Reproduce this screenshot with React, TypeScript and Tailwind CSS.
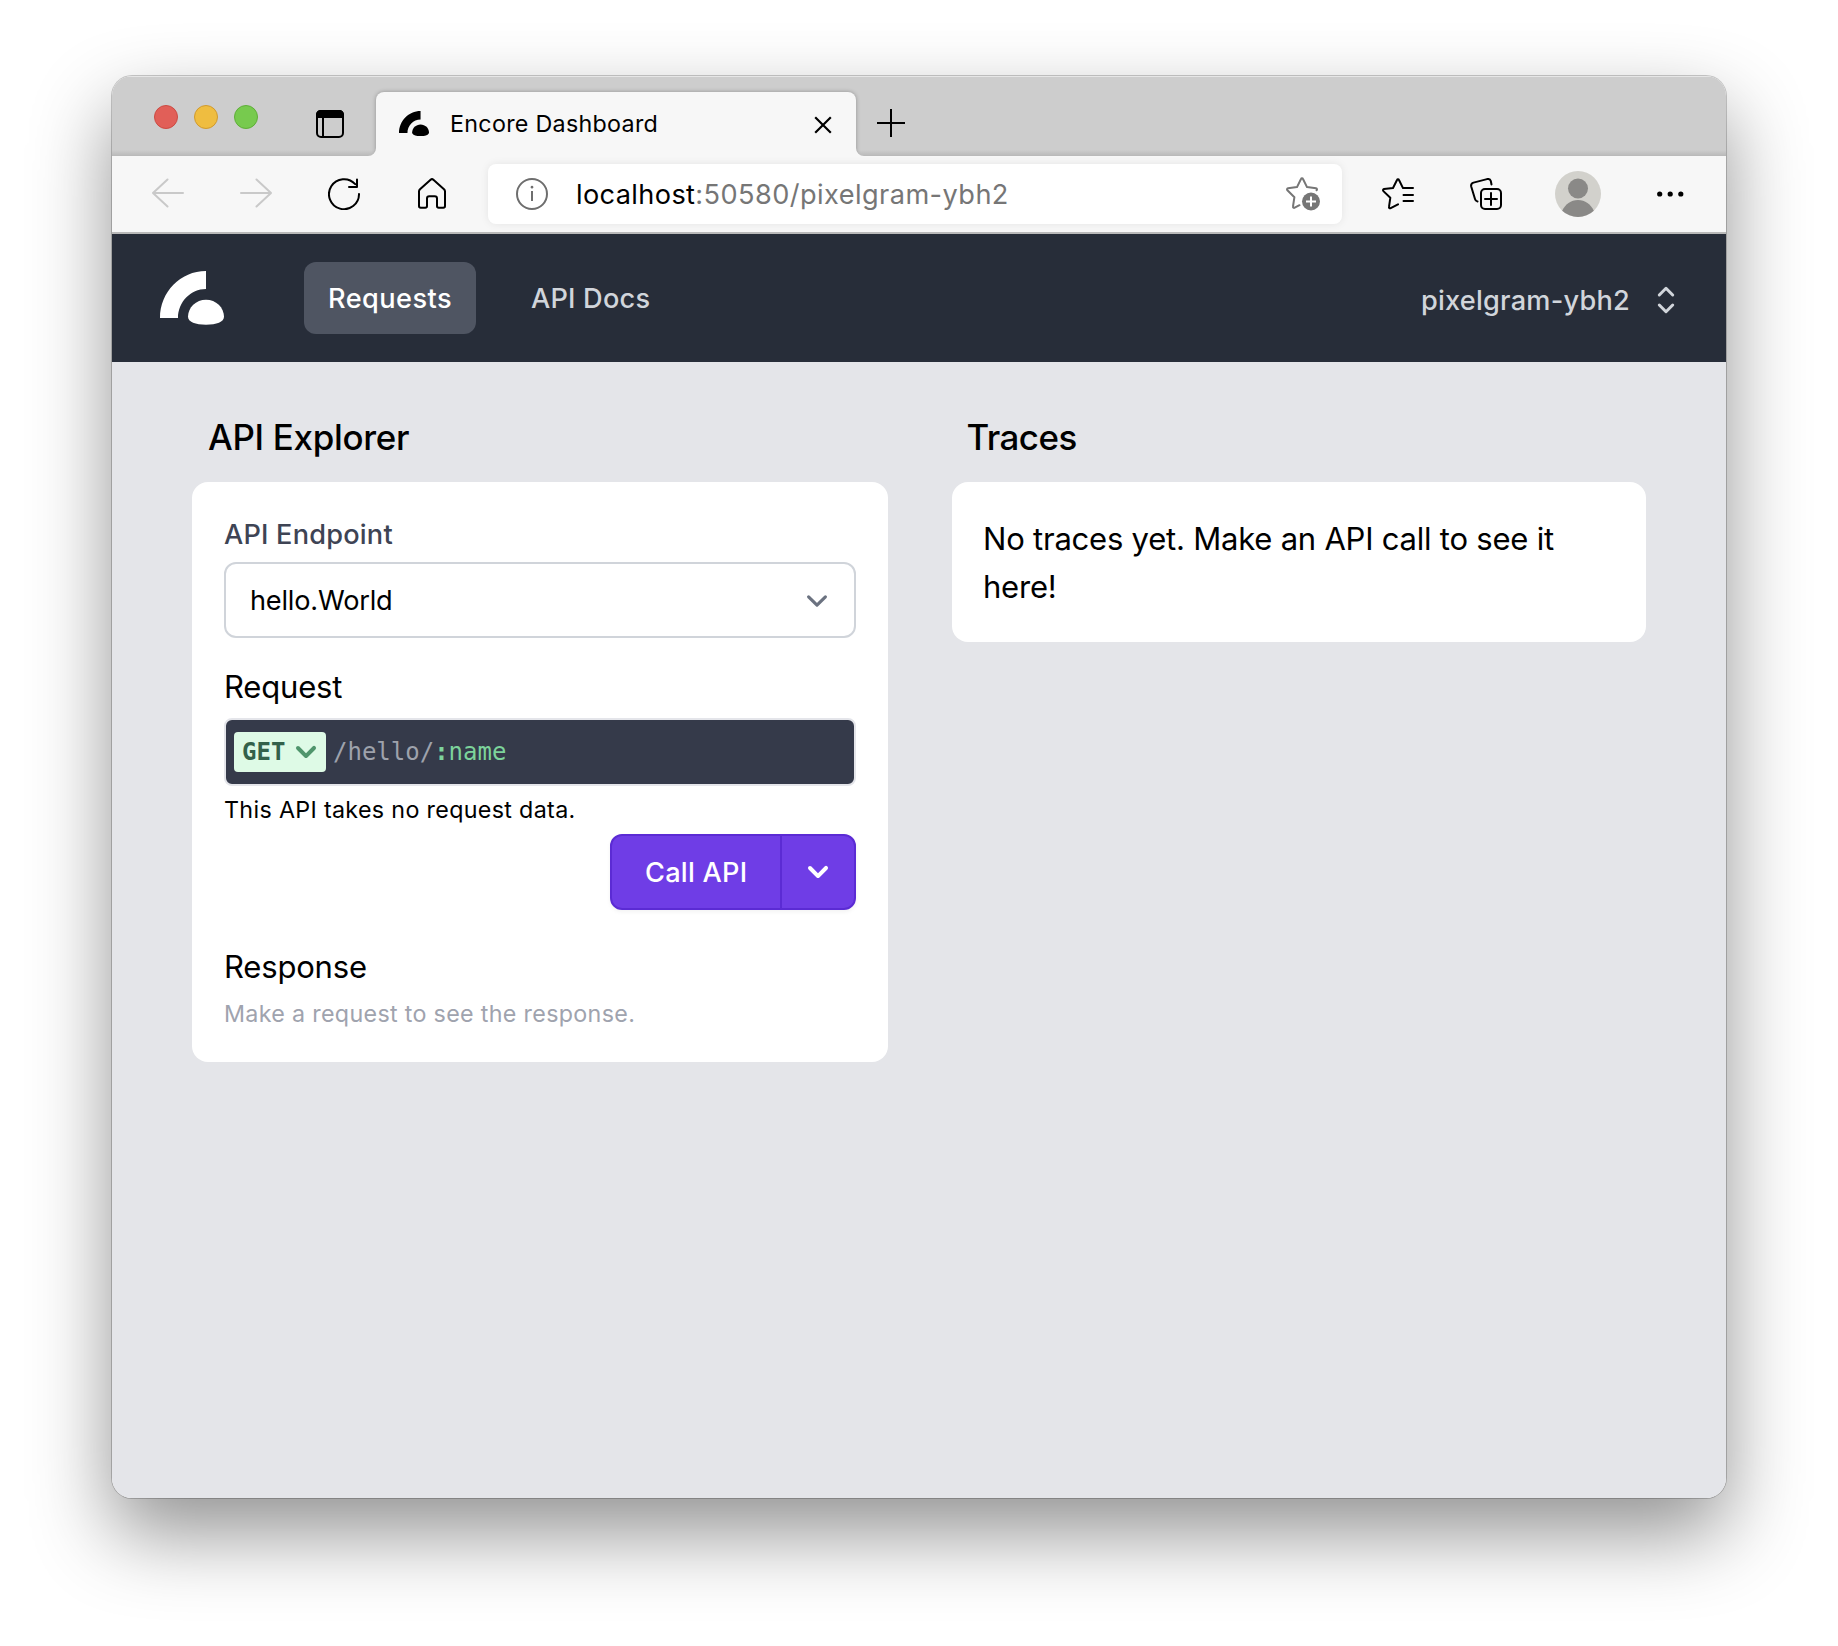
import type { ReactNode } from "react";

function ChevronDown({ className }: { className: string }) {
  return (
    <svg viewBox="0 0 20 20" fill="currentColor" className={`size-10 shrink-0 ${className}`}>
      <path
        fillRule="evenodd"
        clipRule="evenodd"
        d="M5.293 7.293a1 1 0 011.414 0L10 10.586l3.293-3.293a1 1 0 111.414 1.414l-4 4a1 1 0 01-1.414 0l-4-4a1 1 0 010-1.414z"
      />
    </svg>
  );
}

function Logo({ className }: { className: string }) {
  return (
    <svg viewBox="0 0 64 54" fill="currentColor" className={className}>
      <path d="M0 47C0 21 20.500 0 46 0V18C30.500 18 18 31 18 47Z" />
      <path d="M46 28.700C56 28.700 64 36.500 64 45.800C64 51 56.500 53.800 46 53.800S28 51 28 45.800C28 36.500 36 28.700 46 28.700Z" />
    </svg>
  );
}

function LineIcon({ className, box, children }: { className: string; box: string; children: ReactNode }) {
  return (
    <svg
      viewBox={box}
      fill="none"
      stroke="currentColor"
      strokeWidth="2"
      strokeLinecap="round"
      strokeLinejoin="round"
      className={`shrink-0 ${className}`}
    >
      {children}
    </svg>
  );
}

function TabBar() {
  return (
    <div className="relative flex h-20 bg-[#cdcdcd] shadow-[inset_0_1px_0_#e6e6e6]">
      <div className="absolute inset-x-0 bottom-0 h-1.5 bg-linear-to-b from-transparent to-black/10" />
      <div className="flex w-[264px] pl-[42px]">
        <div className="mt-[29px] flex gap-4">
          <span className="size-6 rounded-full border border-[#cc4b43] bg-[#e15f58]" />
          <span className="size-6 rounded-full border border-[#d09a2e] bg-[#efbd40]" />
          <span className="size-6 rounded-full border border-[#5fae39] bg-[#77ca4e]" />
        </div>
        <svg viewBox="0 0 28 28" className="mt-[34px] ml-[58px] size-7">
          <rect x="1" y="1" width="26" height="26" rx="4" fill="none" stroke="#000" strokeWidth="2" />
          <path d="M0 8V4.500A4.500 4.500 0 0 1 4.500 0H23.500A4.500 4.500 0 0 1 28 4.500V8Z" />
          <path d="M7 8V27" stroke="#000" strokeWidth="2" />
        </svg>
      </div>
      <div className="relative mt-4 flex h-16 w-[480px] rounded-t-lg bg-[#f7f7f7] pl-[23px] shadow-[0_0_4px_rgba(0,0,0,0.3)]">
        <svg viewBox="0 0 8 8" className="absolute bottom-0 -left-2 size-2">
          <path d="M8 0V8H0A8 8 0 0 0 8 0Z" fill="#f7f7f7" />
        </svg>
        <svg viewBox="0 0 8 8" className="absolute -right-2 bottom-0 size-2">
          <path d="M0 0V8H8A8 8 0 0 1 0 0Z" fill="#f7f7f7" />
        </svg>
        <Logo className="mt-[19px] h-[25.300px] w-[30px] text-black" />
        <span className="mt-4 ml-[21px] flex-1 text-[23.280px] leading-8 tracking-[0.293px]">Encore Dashboard</span>
        <LineIcon box="0 0 18 18" className="mt-6 mr-6 size-[18px] [stroke-linecap:butt]">
          <path d="M1.200 1.200L16.800 16.800M16.800 1.200L1.200 16.800" strokeWidth="2.200" />
        </LineIcon>
      </div>
      <LineIcon box="0 0 28 28" className="mt-[33px] ml-[21px] size-7 [stroke-linecap:butt]">
        <path d="M14 0V28M0 14H28" />
      </LineIcon>
    </div>
  );
}

function Toolbar() {
  return (
    <div className="relative flex h-[78px] items-center border-b-2 border-[#b9b9b9] bg-[#f7f7f7] pl-10">
      <LineIcon box="0 0 32 32" className="size-8 text-[#c9c9c9]">
        <path d="M1 15H31M15.500 1.500L1 15L15.500 28.500" />
      </LineIcon>
      <LineIcon box="0 0 32 32" className="ml-14 size-8 text-[#c9c9c9]">
        <path d="M31 15H1M16.500 1.500L31 15L16.500 28.500" />
      </LineIcon>
      <LineIcon box="0 0 32 32" className="ml-14 size-8 text-black">
        <path d="M31 16A15 15 0 1 1 27.200 6.200M29 1.500V9H21" />
      </LineIcon>
      <LineIcon box="0 0 28 32" className="ml-[58px] h-8 w-7 text-black">
        <path d="M1 13.500C1 12.600 1.400 11.900 2 11.300L12.600 1.700C13.400 1 14.600 1 15.400 1.700L26 11.300C26.600 11.900 27 12.600 27 13.500V28C27 29 26.300 29.700 25.300 29.700H20.700C19.700 29.700 19 29 19 28V20.500C19 19.200 18 18.200 16.700 18.200H11.300C10 18.200 9 19.200 9 20.500V28C9 29 8.300 29.700 7.300 29.700H2.700C1.700 29.700 1 29 1 28Z" />
      </LineIcon>
      <div className="ml-[42px] flex h-[60px] w-[854px] items-center rounded-lg bg-white pl-7 shadow-[0_0_8px_rgba(0,0,0,0.08)]">
        <LineIcon box="0 0 32 32" className="size-8 text-[#6e6e6e]">
          <circle cx="16" cy="16" r="15" />
          <path d="M16 13V23" strokeLinecap="butt" />
          <path d="M16 9V9.200" strokeWidth="2.600" />
        </LineIcon>
        <span className="mt-0.5 ml-7 flex-1 text-[27.160px] leading-9 whitespace-nowrap text-[#767676]">
          <span className="tracking-[0.370px] text-black">localhost</span>
          <span className="tracking-[0.425px]">:50580/pixelgram-ybh2</span>
        </span>
        <LineIcon box="0 0 34 34" className="mr-[22px] size-[34px] text-[#767676]">
          <path d="M13.500 28.200L8.700 30.700C7.800 31.200 6.800 30.500 7 29.500L8.400 20.200L1.400 13.200C.7 12.500 1.100 11.400 2 11.200L11 10.100L15 2C15.400 1.100 16.600 1.100 17 2L21 10.100L30 11.200C31 11.400 31.300 12.500 30.600 13.200" />
          <circle cx="25" cy="24.500" r="9" fill="currentColor" stroke="none" />
          <path d="M25 19.500V29.500M20 24.500H30" stroke="#fff" strokeLinecap="butt" />
        </LineIcon>
      </div>
      <LineIcon box="0 0 32 32" className="ml-10 size-8 text-black">
        <path d="M16 26.300L8.700 30.100C7.800 30.600 6.800 29.900 7 28.900L8.300 19.800L1.400 13.100C.7 12.400 1.100 11.300 2 11.100L11 10L15 2C15.400 1.100 16.600 1.100 17 2L21 10.100L31 10.100M21.500 17H31M21.500 23H31" />
      </LineIcon>
      <LineIcon box="0 0 32 32" className="ml-14 size-8 text-black">
        <rect x="11" y="11" width="20" height="20" rx="4" />
        <path d="M21 15V27M15 21H27" />
        <path d="M7.500 23.500C6 23.200 5.300 22.200 5 21L1.200 8.500C.8 6.500 1.600 5.200 3.500 4.600L17 1.100C19 .7 20.300 1.400 20.800 3L21.500 6.500" />
      </LineIcon>
      <svg viewBox="0 0 46 46" className="ml-[53px] size-[46px] shrink-0">
        <circle cx="23" cy="23" r="23" fill="#d2d1cc" />
        <circle cx="23" cy="17.500" r="10" fill="#8a8987" />
        <path d="M7.200 39.700C10 33.500 16 29 23 29S36 33.500 38.800 39.700A23 23 0 0 1 7.200 39.700Z" fill="#8a8987" />
      </svg>
      <svg viewBox="0 0 28 6" className="ml-[55.500px] h-1.5 w-7 shrink-0">
        <circle cx="2.700" cy="3" r="2.600" />
        <circle cx="13.200" cy="3" r="2.600" />
        <circle cx="23.800" cy="3" r="2.600" />
      </svg>
    </div>
  );
}

function NavBar() {
  return (
    <nav className="flex h-32 items-center bg-[#272d39] pl-12 text-[27.160px] font-medium">
      <Logo className="h-[54px] w-16 text-white" />
      <a className="ml-20 flex h-[72px] w-[172px] items-center rounded-xl bg-[#4f5562] pt-0.5 pl-6 tracking-[0.446px] text-white">
        Requests
      </a>
      <a className="ml-[55px] flex-1 pt-0.5 tracking-[0.200px] text-[#d1d5db]">API Docs</a>
      <div className="mt-1 mr-10 flex items-center text-[#d1d5db]">
        <span className="mr-4 pt-0.5 tracking-[0.230px]">pixelgram-ybh2</span>
        <svg
          viewBox="0 0 40 40"
          fill="none"
          stroke="currentColor"
          strokeWidth="3"
          strokeLinecap="round"
          strokeLinejoin="round"
          className="size-10"
        >
          <path d="M13.300 15L20 8.300L26.700 15M13.300 25L20 31.700L26.700 25" />
        </svg>
      </div>
    </nav>
  );
}

function ApiExplorer() {
  return (
    <section>
      <h2 className="mb-[17px] pl-4 text-[34.920px] leading-[56px] font-medium tracking-[-0.300px]">API Explorer</h2>
      <div className="rounded-2xl bg-white px-8 pt-[33px] pb-8">
        <div className="text-[27.160px] leading-10 font-medium tracking-[0.200px] text-[#3e4454]">API Endpoint</div>
        <div className="mt-[7px] flex h-[76px] items-center justify-between rounded-xl border-2 border-[#d0d4da] pr-4 pl-6">
          <span className="pt-0.5 text-[27.160px] tracking-[-0.200px]">hello.World</span>
          <svg
            viewBox="0 0 20 20"
            fill="none"
            stroke="currentColor"
            strokeWidth="1.5"
            strokeLinecap="round"
            strokeLinejoin="round"
            className="mt-0.5 size-[42px] text-[#6b7280]"
          >
            <path d="M6 8l4 4 4-4" />
          </svg>
        </div>
        <div className="mt-[25px] text-[31.040px] leading-[48px] tracking-[-0.188px]">Request</div>
        <div className="mt-[7px] flex h-[68px] items-center gap-[7px] rounded-lg border-2 border-[#e4e5ea] bg-[#353a4a] pl-2 font-['DejaVu_Sans_Mono',monospace] text-2xl">
          <span className="flex h-10 w-[92px] items-center justify-between rounded-sm bg-[#defae6] pl-2 font-bold text-[#33614a]">
            GET
            <ChevronDown className="text-[#4f956c]" />
          </span>
          <span className="text-[#9ea2ac]">
            /hello/<span className="text-[#7cd39b]"><span className="font-bold">:</span>name</span>
          </span>
        </div>
        <p className="mt-2 text-[23.280px] leading-8 tracking-[0.330px]">This API takes no request data.</p>
        <div className="mt-2 ml-auto flex h-[76px] w-[246px] rounded-xl border-2 border-[#5b2bd4] bg-[#6f3de6] text-white shadow-[0_2px_4px_rgba(0,0,0,0.05)]">
          <span className="flex w-[170px] items-center border-r-2 border-[#5b2bd4] pt-0.5 pl-[33px] text-[27.160px] font-medium tracking-[0.250px]">
            Call API
          </span>
          <span className="flex flex-1 items-center justify-center">
            <ChevronDown className="text-white" />
          </span>
        </div>
        <div className="mt-[33px] text-[31.040px] leading-[48px] tracking-[-0.200px]">Response</div>
        <p className="mt-[7px] text-[23.280px] leading-8 tracking-[0.320px] text-[#9fa3ae]">Make a request to see the response.</p>
      </div>
    </section>
  );
}

function Traces() {
  return (
    <section>
      <h2 className="mb-[17px] pl-[14.500px] text-[34.920px] leading-[56px] font-medium tracking-[-0.550px]">Traces</h2>
      <div className="rounded-2xl bg-white pt-[33px] pr-[30px] pb-[31px] pl-[31px] text-[31.040px] leading-[48px] tracking-[-0.231px]">
        No traces yet. Make an API call to see it here!
      </div>
    </section>
  );
}

export default function App() {
  return (
    <div className="h-[1646px] w-[1838px] overflow-hidden bg-white pt-[76px] pl-28 font-['Inter',sans-serif] text-black">
      <div className="h-[1422px] w-[1614px] rounded-[20px] shadow-[0_0_0_1px_rgba(0,0,0,0.2),0_35px_80px_rgba(0,0,0,0.43)]">
        <div className="flex h-full flex-col overflow-hidden rounded-[20px]">
          <TabBar />
          <Toolbar />
          <NavBar />
          <main className="grid flex-1 grid-cols-[696px_694px] content-start gap-16 bg-[#e4e5e9] px-20 pt-[47px]">
            <ApiExplorer />
            <Traces />
          </main>
        </div>
      </div>
    </div>
  );
}
